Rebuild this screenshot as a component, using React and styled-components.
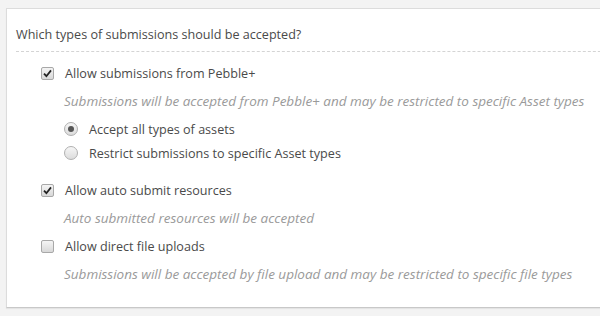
import styled, { createGlobalStyle } from "styled-components";

const GlobalStyle = createGlobalStyle`
  html, body {
    margin: 0;
    padding: 0;
    background: #f3f3f3;
  }
  body {
    font-family: "Open Sans", "Liberation Sans", sans-serif;
    font-size: 12.6px;
    color: #555;
  }
`;

const Page = styled.div`
  width: 600px;
  height: 316px;
  overflow: hidden;
  padding: 8px 0 0 6px;
  box-sizing: border-box;
`;

const Panel = styled.section`
  width: 620px;
  background: #fff;
  border: 1px solid #dcdcdc;
  border-bottom-color: #c8c8c8;
  box-shadow: 0 1px 1px rgba(0, 0, 0, 0.06);
  padding: 0 0 22px 9px;
`;

const Title = styled.div`
  line-height: 20px;
  padding: 16px 0 6px;
  border-bottom: 1px dashed #d4d4d4;
  color: #4a4a4a;
`;

const List = styled.div`
  display: flex;
  flex-direction: column;
  gap: 4px;
  padding: 8px 0 0 25px;
`;

const Row = styled.label`
  display: flex;
  align-items: center;
  height: 24px;
  gap: 11px;
  padding-top: 2px;
  box-sizing: border-box;
  color: #4a4a4a;
  margin-left: ${(p) => p.$indent || 0}px;
`;

const Help = styled.div`
  line-height: 24px;
  padding: 1px 0 0 23px;
  margin-bottom: -1px;
  font-style: italic;
  font-size: 13.5px;
  color: #9a9a9a;
`;

const Radios = styled.div`
  display: flex;
  flex-direction: column;
  margin-bottom: 9px;
`;

const Box = styled.span`
  width: 11px;
  height: 11px;
  flex: none;
  border: 1px solid #a8a8a8;
  border-radius: 2px;
  background: linear-gradient(#f4f4f4, #d8d8d8);
  display: flex;
  align-items: center;
  justify-content: center;
  svg {
    display: block;
  }
`;

const Radio = styled.span`
  width: 12px;
  height: 12px;
  flex: none;
  border: 1px solid #b0b0b0;
  border-radius: 50%;
  background: linear-gradient(#f6f6f6, #dcdcdc);
  display: flex;
  align-items: center;
  justify-content: center;
  &::after {
    content: "";
    width: 6px;
    height: 6px;
    border-radius: 50%;
    background: ${(p) => (p.$on ? "#555" : "transparent")};
  }
`;

function Checkbox({ checked }) {
  return (
    <Box>
      {checked && (
        <svg width="9" height="9" viewBox="0 0 9 9">
          <path d="M1 4.6 L3.4 7.2 L8 1.4" fill="none" stroke="#222" strokeWidth="1.8" />
        </svg>
      )}
    </Box>
  );
}

export default function App() {
  return (
    <>
      <GlobalStyle />
      <Page>
        <Panel>
          <Title>Which types of submissions should be accepted?</Title>
          <List>
            <Row>
              <Checkbox checked />
              Allow submissions from Pebble+
            </Row>
            <Help>
              Submissions will be accepted from Pebble+ and may be restricted to specific Asset types
            </Help>
            <Radios>
              <Row $indent={23}>
                <Radio $on />
                Accept all types of assets
              </Row>
              <Row $indent={23}>
                <Radio />
                Restrict submissions to specific Asset types
              </Row>
            </Radios>
            <Row>
              <Checkbox checked />
              Allow auto submit resources
            </Row>
            <Help>Auto submitted resources will be accepted</Help>
            <Row>
              <Checkbox />
              Allow direct file uploads
            </Row>
            <Help>
              Submissions will be accepted by file upload and may be restricted to specific file types
            </Help>
          </List>
        </Panel>
      </Page>
    </>
  );
}
